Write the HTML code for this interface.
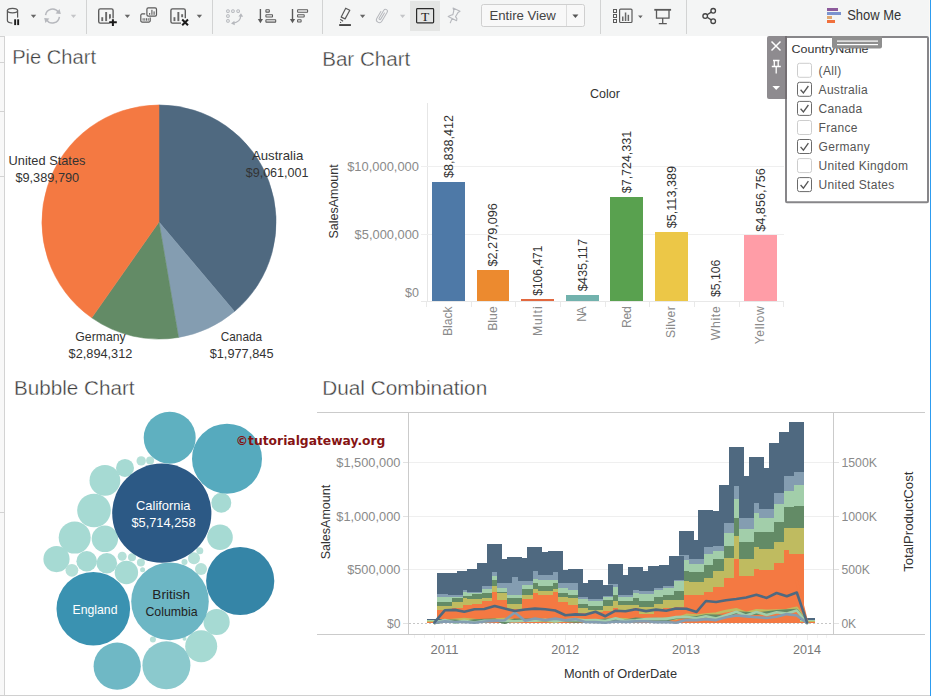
<!DOCTYPE html>
<html lang="en"><head><meta charset="utf-8"><title>Tableau Dashboard</title>
<style>
html,body{margin:0;padding:0;background:#fff;}
body{width:931px;height:696px;overflow:hidden;position:relative;font-family:"Liberation Sans", sans-serif;}
#toolbar{position:absolute;left:0;top:0;width:931px;height:36px;background:#f4f5f5;}
#leftstrip{position:absolute;left:0;top:36px;width:4px;height:659px;background:#f8f8f8;border-right:1px solid #d3d3d3;}
#leftstrip i{position:absolute;left:0;width:4px;height:1px;background:#d3d3d3;}
#bottomline{position:absolute;left:0;top:695px;width:931px;height:1px;background:#d0d0d0;}
#rightline{position:absolute;left:930px;top:0;width:1px;height:696px;background:#2d9cf0;}
#rightpad{position:absolute;left:929px;top:0;width:1px;height:36px;background:#fdf9f4;}
svg{position:absolute;left:0;top:0;font-family:"Liberation Sans", sans-serif;}
</style></head>
<body>
<div id="toolbar"></div>
<div id="rightpad"></div>
<div id="leftstrip"><i style="top:0"></i><i style="top:26px"></i><i style="top:75px"></i><i style="top:140px"></i><i style="top:476px"></i></div>
<div id="bottomline"></div>
<div id="rightline"></div>
<svg width="931" height="696" viewBox="0 0 931 696">
<g id="toolbar-icons">
<g shape-rendering="crispEdges">
<rect x="86" y="0" width="1" height="34" fill="#d2d3d3"/>
<rect x="212" y="0" width="1" height="34" fill="#d2d3d3"/>
<rect x="322" y="0" width="1" height="34" fill="#d2d3d3"/>
<rect x="600" y="0" width="1" height="34" fill="#d2d3d3"/>
<rect x="686" y="0" width="1" height="34" fill="#d2d3d3"/>
</g>
<g fill="none" stroke="#5a5a5a" stroke-width="1.25"><ellipse cx="12.5" cy="10.6" rx="5.1" ry="2.3"/><path d="M7.4,10.6 V20.6 C7.4,22.4 10,23 12.3,23"/><path d="M17.6,10.6 V17.6"/></g>
<rect x="14.2" y="19.3" width="1.9" height="5.8" fill="#1c1c1c"/><rect x="17.2" y="19.3" width="1.9" height="5.8" fill="#1c1c1c"/>
<path d="M30.8,14.8 h5.4 l-2.7,3.2 z" fill="#666"/>
<g fill="none" stroke="#b6b8bd" stroke-width="1.5"><path d="M45.6,15.2 A7,7 0 0 1 58.4,12.2"/><path d="M59.4,16.8 A7,7 0 0 1 46.6,19.8"/></g>
<path d="M55.6,13.4 l5.2,0.6 l-1.2,-5 z" fill="#b6b8bd"/><path d="M49.4,18.6 l-5.2,-0.6 l1.2,5 z" fill="#b6b8bd"/>
<path d="M70.8,14.8 h5.4 l-2.7,3.2 z" fill="#c4c5c8"/>
<rect x="98.7" y="8.9" width="14.4" height="14.2" rx="1.6" fill="none" stroke="#5a5a5a" stroke-width="1.35"/>
<g fill="#686868"><rect x="101.3" y="17.2" width="1.9" height="3.9"/><rect x="105.2" y="12" width="1.9" height="9.1"/><rect x="109" y="14.2" width="1.9" height="5"/></g>
<rect x="109.6" y="18.4" width="8" height="8" fill="#f4f5f5"/>
<path d="M112.9,19.3 v6.6 M109.2,22.3 h7.6" stroke="#1a1a1a" stroke-width="2" fill="none"/>
<path d="M124.7,14.8 h5.4 l-2.7,3.2 z" fill="#666"/>
<rect x="146.9" y="7.9" width="9.6" height="8.2" rx="1.4" fill="none" stroke="#5a5a5a" stroke-width="1.20"/>
<g fill="#686868"><rect x="149" y="13" width="1.2" height="1.8"/><rect x="151.3" y="9.8" width="1.2" height="5"/><rect x="153.5" y="11.4" width="1.2" height="3.4"/></g>
<path d="M145.2,13.9 h-3 a1.4,1.4 0 0 0 -1.4,1.4 v5.4 a1.4,1.4 0 0 0 1.4,1.4 h6.6 a1.4,1.4 0 0 0 1.4,-1.4 v-3.2" fill="none" stroke="#5a5a5a" stroke-width="1.2"/>
<g fill="#686868"><rect x="142.6" y="18.2" width="1" height="2.5"/><rect x="144.3" y="18.2" width="1" height="2.5"/><rect x="146" y="18.2" width="1" height="2.5"/><rect x="147.7" y="18.2" width="1" height="2.5"/></g>
<rect x="170.9" y="8.9" width="14.4" height="14.2" rx="1.6" fill="none" stroke="#5a5a5a" stroke-width="1.35"/>
<g fill="#686868"><rect x="173.5" y="17.2" width="1.9" height="3.9"/><rect x="177.4" y="12" width="1.9" height="9.1"/><rect x="181.2" y="14.2" width="1.9" height="3"/></g>
<rect x="181" y="18.2" width="8.5" height="8" fill="#f4f5f5"/>
<path d="M182.2,19.5 l5.8,5.8 M188,19.5 l-5.8,5.8" stroke="#1a1a1a" stroke-width="2" fill="none"/>
<path d="M196.7,14.8 h5.4 l-2.7,3.2 z" fill="#666"/>
<g fill="none" stroke="#b6b8bd" stroke-width="1">
<rect x="226.7" y="9.9" width="2.5" height="2.5" rx="0.3"/>
<rect x="231.7" y="9.9" width="2.5" height="2.5" rx="0.3"/>
<rect x="236.9" y="9.9" width="2.5" height="2.5" rx="0.3"/>
<rect x="226.7" y="14.8" width="2.5" height="2.5" rx="0.3"/>
<rect x="226.7" y="19.7" width="2.5" height="2.5" rx="0.3"/>
<path d="M240.8,16 C240.4,20 237,22.6 233.2,23.2" stroke-width="1.3"/></g>
<path d="M238.4,16.6 l2.6,-3.4 l2.2,3.6 z M234.4,20.8 l-3.4,2.6 l3.8,1.8 z" fill="#b6b8bd"/>
<path d="M260.4,9 v11" fill="none" stroke="#5a5a5a" stroke-width="1.4"/><path d="M257.8,19 h5.2 l-2.6,4.2 z" fill="#5a5a5a"/>
<g fill="none" stroke="#5a5a5a" stroke-width="1.05"><rect x="265.9" y="9.8" width="3.4" height="2.3" rx="0.4"/><rect x="265.9" y="14.7" width="6.6" height="2.3" rx="0.4"/><rect x="265.9" y="19.7" width="9.8" height="2.4" rx="0.4"/></g>
<path d="M292.5,9 v11" fill="none" stroke="#5a5a5a" stroke-width="1.4"/><path d="M289.9,19 h5.2 l-2.6,4.2 z" fill="#5a5a5a"/>
<g fill="none" stroke="#5a5a5a" stroke-width="1.05"><rect x="297.6" y="9.8" width="10" height="2.4" rx="0.4"/><rect x="297.6" y="14.7" width="6.6" height="2.3" rx="0.4"/><rect x="297.6" y="19.7" width="3.5" height="2.3" rx="0.4"/></g>
<path d="M345.7,8.2 L349.8,10.2 L345.1,18.9 L341.2,17.1 Z M340.2,19.2 L343.1,21.2" fill="none" stroke="#5a5a5a" stroke-width="1.2" stroke-linejoin="round"/>
<circle cx="340.6" cy="22.4" r="0.65" fill="#5a5a5a"/>
<rect x="339.2" y="24.1" width="11.7" height="1.9" fill="#444"/>
<path d="M359.9,14.8 h5.4 l-2.7,3.2 z" fill="#666"/>
<path transform="translate(381.9,15.4) rotate(31)" d="M0.9,-3.4 V3.8 A0.95,0.95 0 0 1 -1,3.8 V-5.4 A1.95,1.95 0 0 1 2.9,-5.4 V5 A2.9,2.9 0 0 1 -2.9,5 V-2.8" fill="none" stroke="#b6b8bd" stroke-width="1.0" stroke-linecap="round"/>
<path d="M399.9,14.8 h5.4 l-2.7,3.2 z" fill="#c4c5c8"/>
<rect x="410" y="1" width="30" height="30" fill="#e4e5e4"/>
<rect x="416.6" y="8.6" width="17" height="14.2" rx="0.8" fill="none" stroke="#2a2a2a" stroke-width="1.2"/>
<text x="425.1" y="20.6" font-family='"Liberation Serif", serif' font-size="13.5" text-anchor="middle" fill="#222">T</text>
<path d="M453.1,8 L460,11.3 L458.1,12.4 L455.5,16.7 L456.9,18.6 L456.6,20.8 L448.2,16.4 L450.8,15.2 L452.9,14.6 L453.8,10.6 Z M452.1,18.6 L450.3,22.7" fill="none" stroke="#b6b8bd" stroke-width="1.1" stroke-linejoin="round" stroke-linecap="round"/>
<rect x="481.5" y="4.5" width="103" height="22" rx="2" fill="#f8f8f8" stroke="#cfcfcf"/>
<rect x="566" y="5" width="1" height="21" fill="#dcdcdc" shape-rendering="crispEdges"/>
<text x="489.4" y="20" font-size="13.4" fill="#444" textLength="66.5" lengthAdjust="spacingAndGlyphs">Entire View</text>
<path d="M572.4,14.5 h6.0 l-3.0,3.4 z" fill="#555"/>
<g fill="none" stroke="#5a5a5a" stroke-width="1"><rect x="613.5" y="9.5" width="3" height="3"/><rect x="613.5" y="14.5" width="3" height="3"/><rect x="613.5" y="19.5" width="3" height="3"/></g>
<rect x="619.6" y="9.1" width="12.4" height="13.4" rx="1.0" fill="none" stroke="#5a5a5a" stroke-width="1.20"/>
<g fill="#686868"><rect x="622" y="16.5" width="1.5" height="4.5"/><rect x="624.8" y="12.5" width="1.5" height="8.5"/><rect x="627.6" y="14.8" width="1.5" height="6.2"/></g>
<path d="M638.1,15.4 h4.6 l-2.3,2.8 z" fill="#666"/>
<path d="M654.3,9.8 h16.8" fill="none" stroke="#5a5a5a" stroke-width="1.8"/><path d="M656.5,9.8 v8.4 h12.5 v-8.4 M662.7,18.2 v5 M658.8,23.6 h8" fill="none" stroke="#5a5a5a" stroke-width="1.3"/>
<g fill="none" stroke="#444" stroke-width="1.35"><circle cx="705.2" cy="16" r="2.3"/><circle cx="713.2" cy="10.8" r="2.3"/><circle cx="713.2" cy="21.2" r="2.3"/><path d="M707.2,14.8 l4,-2.7 M707.2,17.2 l4,2.7"/></g>
<g shape-rendering="crispEdges"><rect x="827" y="8" width="11" height="3" fill="#8c5a9b"/><rect x="827" y="12" width="14" height="3" fill="#7b93cf"/><rect x="827" y="16" width="5" height="3" fill="#e0a872"/><rect x="827" y="20" width="8" height="3" fill="#f0703c"/></g>
<text x="847.2" y="20.2" font-size="14.4" fill="#333" textLength="54" lengthAdjust="spacingAndGlyphs">Show Me</text>
</g>
<g id="pie">
<path d="M159.00,222.00 L159.00,104.90 A117.10,117.10 0 0 1 234.49,311.52 Z" fill="#4f6980" stroke="#4f6980" stroke-width="0.5" stroke-linejoin="round"/>
<path d="M159.00,222.00 L234.49,311.52 A117.10,117.10 0 0 1 178.55,337.46 Z" fill="#849db1" stroke="#849db1" stroke-width="0.5" stroke-linejoin="round"/>
<path d="M159.00,222.00 L178.55,337.46 A117.10,117.10 0 0 1 91.73,317.85 Z" fill="#638b66" stroke="#638b66" stroke-width="0.5" stroke-linejoin="round"/>
<path d="M159.00,222.00 L91.73,317.85 A117.10,117.10 0 0 1 159.00,104.90 Z" fill="#f47942" stroke="#f47942" stroke-width="0.5" stroke-linejoin="round"/>
</g>
<g id="bar">
<g shape-rendering="crispEdges">
<rect x="427" y="103" width="1" height="199" fill="#e6e6e6"/>
<rect x="421" y="166" width="363" height="1" fill="#efefef"/>
<rect x="421" y="234" width="363" height="1" fill="#efefef"/>
<rect x="432.0" y="181.7" width="32.8" height="119.1" fill="#4e79a7"/>
<rect x="476.6" y="270.1" width="32.8" height="30.7" fill="#ec8a2f"/>
<rect x="521.1" y="299.4" width="32.8" height="1.4" fill="#e2683f"/>
<rect x="565.7" y="294.9" width="32.8" height="5.9" fill="#72b2ad"/>
<rect x="610.3" y="196.8" width="32.8" height="104.0" fill="#59a14f"/>
<rect x="654.9" y="231.9" width="32.8" height="68.9" fill="#ecc747"/>
<rect x="744.0" y="235.4" width="32.8" height="65.4" fill="#ff9da7"/>
<rect x="421" y="301" width="363" height="1" fill="#e8e8e8"/>
<rect x="426" y="302" width="1" height="5" fill="#e9e9e9"/>
<rect x="471" y="302" width="1" height="5" fill="#e9e9e9"/>
<rect x="515" y="302" width="1" height="5" fill="#e9e9e9"/>
<rect x="560" y="302" width="1" height="5" fill="#e9e9e9"/>
<rect x="605" y="302" width="1" height="5" fill="#e9e9e9"/>
<rect x="649" y="302" width="1" height="5" fill="#e9e9e9"/>
<rect x="694" y="302" width="1" height="5" fill="#e9e9e9"/>
<rect x="739" y="302" width="1" height="5" fill="#e9e9e9"/>
<rect x="783" y="302" width="1" height="5" fill="#e9e9e9"/>
</g>
<text transform="translate(448.8,178.1) rotate(-90)" font-size="12.5" fill="#333" dominant-baseline="central" textLength="63.0" lengthAdjust="spacingAndGlyphs">$8,838,412</text>
<text transform="translate(448.4,306.3) rotate(-90)" font-size="12.2" fill="#8a8a8a" text-anchor="end" dominant-baseline="central" textLength="29.8" lengthAdjust="spacing">Black</text>
<text transform="translate(493.4,266.5) rotate(-90)" font-size="12.5" fill="#333" dominant-baseline="central" textLength="63.4" lengthAdjust="spacingAndGlyphs">$2,279,096</text>
<text transform="translate(493.0,306.3) rotate(-90)" font-size="12.2" fill="#8a8a8a" text-anchor="end" dominant-baseline="central" textLength="24.5" lengthAdjust="spacing">Blue</text>
<text transform="translate(537.9,295.8) rotate(-90)" font-size="12.5" fill="#333" dominant-baseline="central" textLength="50.3" lengthAdjust="spacingAndGlyphs">$106,471</text>
<text transform="translate(537.5,306.3) rotate(-90)" font-size="12.2" fill="#8a8a8a" text-anchor="end" dominant-baseline="central" textLength="29.8" lengthAdjust="spacing">Multi</text>
<text transform="translate(582.5,291.3) rotate(-90)" font-size="12.5" fill="#333" dominant-baseline="central" textLength="52.3" lengthAdjust="spacingAndGlyphs">$435,117</text>
<text transform="translate(582.1,306.3) rotate(-90)" font-size="12.2" fill="#8a8a8a" text-anchor="end" dominant-baseline="central" textLength="15.5" lengthAdjust="spacing">NA</text>
<text transform="translate(627.1,193.2) rotate(-90)" font-size="12.5" fill="#333" dominant-baseline="central" textLength="62.3" lengthAdjust="spacingAndGlyphs">$7,724,331</text>
<text transform="translate(626.7,306.3) rotate(-90)" font-size="12.2" fill="#8a8a8a" text-anchor="end" dominant-baseline="central" textLength="21.6" lengthAdjust="spacing">Red</text>
<text transform="translate(671.6,228.3) rotate(-90)" font-size="12.5" fill="#333" dominant-baseline="central" textLength="62.3" lengthAdjust="spacingAndGlyphs">$5,113,389</text>
<text transform="translate(671.2,306.3) rotate(-90)" font-size="12.2" fill="#8a8a8a" text-anchor="end" dominant-baseline="central" textLength="31.8" lengthAdjust="spacing">Silver</text>
<text transform="translate(716.2,297.1) rotate(-90)" font-size="12.5" fill="#333" dominant-baseline="central" textLength="37.4" lengthAdjust="spacingAndGlyphs">$5,106</text>
<text transform="translate(715.8,306.3) rotate(-90)" font-size="12.2" fill="#8a8a8a" text-anchor="end" dominant-baseline="central" textLength="33.9" lengthAdjust="spacing">White</text>
<text transform="translate(760.8,231.8) rotate(-90)" font-size="12.5" fill="#333" dominant-baseline="central" textLength="63.6" lengthAdjust="spacingAndGlyphs">$4,856,756</text>
<text transform="translate(760.4,306.3) rotate(-90)" font-size="12.2" fill="#8a8a8a" text-anchor="end" dominant-baseline="central" textLength="38.0" lengthAdjust="spacing">Yellow</text>
<text x="419" y="166.5" font-size="12.8" fill="#8a8a8a" text-anchor="end" dominant-baseline="central" textLength="71.8" lengthAdjust="spacingAndGlyphs">$10,000,000</text>
<text x="419" y="234.8" font-size="12.8" fill="#8a8a8a" text-anchor="end" dominant-baseline="central" textLength="64.4" lengthAdjust="spacingAndGlyphs">$5,000,000</text>
<text x="419" y="292.6" font-size="12.8" fill="#8a8a8a" text-anchor="end" dominant-baseline="central" textLength="13.9" lengthAdjust="spacingAndGlyphs">$0</text>
<text transform="translate(333.5,201.4) rotate(-90)" font-size="12.5" fill="#333" text-anchor="middle" dominant-baseline="central" textLength="74.2" lengthAdjust="spacingAndGlyphs">SalesAmount</text>
<text x="605" y="94" font-size="12.5" fill="#333" text-anchor="middle" dominant-baseline="central">Color</text>
</g>
<g id="bubble">
<circle cx="221.3" cy="502.8" r="10.0" fill="#a6dad3"/>
<circle cx="220.0" cy="537.3" r="12.8" fill="#a6dad3"/>
<circle cx="104.9" cy="480.4" r="15.4" fill="#a6dad3"/>
<circle cx="125.0" cy="467.9" r="9.0" fill="#a6dad3"/>
<circle cx="141.2" cy="460.9" r="4.7" fill="#b5e0d8"/>
<circle cx="150.1" cy="460.6" r="4.0" fill="#b5e0d8"/>
<circle cx="94.0" cy="510.5" r="16.8" fill="#a6dad3"/>
<circle cx="74.7" cy="537.6" r="16.0" fill="#a6dad3"/>
<circle cx="104.9" cy="538.8" r="13.2" fill="#a6dad3"/>
<circle cx="56.5" cy="559.1" r="13.1" fill="#a6dad3"/>
<circle cx="86.7" cy="561.3" r="10.3" fill="#a6dad3"/>
<circle cx="106.8" cy="563.3" r="10.3" fill="#a6dad3"/>
<circle cx="126.4" cy="572.5" r="11.7" fill="#a6dad3"/>
<circle cx="71.9" cy="570.3" r="6.4" fill="#b5e0d8"/>
<circle cx="122.2" cy="556.3" r="4.5" fill="#b5e0d8"/>
<circle cx="132.0" cy="557.2" r="4.0" fill="#b5e0d8"/>
<circle cx="140.9" cy="562.5" r="4.0" fill="#b5e0d8"/>
<circle cx="142.6" cy="569.7" r="2.5" fill="#b5e0d8"/>
<circle cx="194.0" cy="558.3" r="6.0" fill="#b5e0d8"/>
<circle cx="201.0" cy="568.9" r="6.0" fill="#b5e0d8"/>
<circle cx="199.8" cy="550.7" r="3.5" fill="#b5e0d8"/>
<circle cx="184.5" cy="561.9" r="3.0" fill="#b5e0d8"/>
<circle cx="152.9" cy="639.6" r="3.0" fill="#b5e0d8"/>
<circle cx="184.5" cy="638.7" r="2.0" fill="#b5e0d8"/>
<circle cx="201.2" cy="646.3" r="16.0" fill="#a6dad3"/>
<circle cx="216.6" cy="622.0" r="13.1" fill="#a6dad3"/>
<circle cx="161.8" cy="513.2" r="49.6" fill="#2c5985"/>
<circle cx="169.7" cy="437.7" r="26.0" fill="#5fb0c0"/>
<circle cx="227.0" cy="458.7" r="35.0" fill="#56aabe"/>
<circle cx="93.3" cy="608.8" r="36.8" fill="#3a92b1"/>
<circle cx="170.0" cy="601.4" r="38.8" fill="#6cb6c4"/>
<circle cx="240.2" cy="581.0" r="34.1" fill="#3585a7"/>
<circle cx="117.2" cy="666.2" r="23.6" fill="#6fb8c5"/>
<circle cx="166.4" cy="665.3" r="24.0" fill="#8bc9cd"/>
</g>
<g id="dual">
<g shape-rendering="crispEdges">
<rect x="317" y="412" width="608" height="1" fill="#cbcbcb"/>
<rect x="317" y="634" width="608" height="1" fill="#cbcbcb"/>
<rect x="408" y="412" width="1" height="223" fill="#cbcbcb"/>
<rect x="833" y="412" width="1" height="223" fill="#cbcbcb"/>
<rect x="409" y="462" width="424" height="1" fill="#efefef"/>
<rect x="403" y="462" width="5" height="1" fill="#e2e2e2"/>
<rect x="834" y="462" width="5" height="1" fill="#e2e2e2"/>
<rect x="409" y="516" width="424" height="1" fill="#efefef"/>
<rect x="403" y="516" width="5" height="1" fill="#e2e2e2"/>
<rect x="834" y="516" width="5" height="1" fill="#e2e2e2"/>
<rect x="409" y="569" width="424" height="1" fill="#efefef"/>
<rect x="403" y="569" width="5" height="1" fill="#e2e2e2"/>
<rect x="834" y="569" width="5" height="1" fill="#e2e2e2"/>
<rect x="403" y="623" width="5" height="1" fill="#e2e2e2"/>
<rect x="834" y="623" width="5" height="1" fill="#e2e2e2"/>
<rect x="414" y="635" width="1" height="3" fill="#f2f2f2"/>
<rect x="424" y="635" width="1" height="3" fill="#f2f2f2"/>
<rect x="434" y="635" width="1" height="3" fill="#f2f2f2"/>
<rect x="454" y="635" width="1" height="3" fill="#f2f2f2"/>
<rect x="464" y="635" width="1" height="3" fill="#f2f2f2"/>
<rect x="474" y="635" width="1" height="3" fill="#f2f2f2"/>
<rect x="484" y="635" width="1" height="3" fill="#f2f2f2"/>
<rect x="494" y="635" width="1" height="3" fill="#f2f2f2"/>
<rect x="504" y="635" width="1" height="3" fill="#f2f2f2"/>
<rect x="514" y="635" width="1" height="3" fill="#f2f2f2"/>
<rect x="525" y="635" width="1" height="3" fill="#f2f2f2"/>
<rect x="534" y="635" width="1" height="3" fill="#f2f2f2"/>
<rect x="545" y="635" width="1" height="3" fill="#f2f2f2"/>
<rect x="555" y="635" width="1" height="3" fill="#f2f2f2"/>
<rect x="575" y="635" width="1" height="3" fill="#f2f2f2"/>
<rect x="585" y="635" width="1" height="3" fill="#f2f2f2"/>
<rect x="595" y="635" width="1" height="3" fill="#f2f2f2"/>
<rect x="605" y="635" width="1" height="3" fill="#f2f2f2"/>
<rect x="615" y="635" width="1" height="3" fill="#f2f2f2"/>
<rect x="625" y="635" width="1" height="3" fill="#f2f2f2"/>
<rect x="635" y="635" width="1" height="3" fill="#f2f2f2"/>
<rect x="646" y="635" width="1" height="3" fill="#f2f2f2"/>
<rect x="655" y="635" width="1" height="3" fill="#f2f2f2"/>
<rect x="666" y="635" width="1" height="3" fill="#f2f2f2"/>
<rect x="676" y="635" width="1" height="3" fill="#f2f2f2"/>
<rect x="696" y="635" width="1" height="3" fill="#f2f2f2"/>
<rect x="705" y="635" width="1" height="3" fill="#f2f2f2"/>
<rect x="716" y="635" width="1" height="3" fill="#f2f2f2"/>
<rect x="726" y="635" width="1" height="3" fill="#f2f2f2"/>
<rect x="736" y="635" width="1" height="3" fill="#f2f2f2"/>
<rect x="746" y="635" width="1" height="3" fill="#f2f2f2"/>
<rect x="756" y="635" width="1" height="3" fill="#f2f2f2"/>
<rect x="766" y="635" width="1" height="3" fill="#f2f2f2"/>
<rect x="776" y="635" width="1" height="3" fill="#f2f2f2"/>
<rect x="786" y="635" width="1" height="3" fill="#f2f2f2"/>
<rect x="796" y="635" width="1" height="3" fill="#f2f2f2"/>
<rect x="817" y="635" width="1" height="3" fill="#f2f2f2"/>
<rect x="826" y="635" width="1" height="3" fill="#f2f2f2"/>
<rect x="444" y="635" width="1" height="5" fill="#ebebeb"/>
<rect x="565" y="635" width="1" height="5" fill="#ebebeb"/>
<rect x="686" y="635" width="1" height="5" fill="#ebebeb"/>
<rect x="807" y="635" width="1" height="5" fill="#ebebeb"/>
</g>
<line x1="409" y1="623.5" x2="833" y2="623.5" stroke="#c6c6c6" stroke-width="1" stroke-dasharray="2,2"/>
<g shape-rendering="crispEdges">
<rect x="427.00" y="621.60" width="15.00" height="1.60" fill="#f47942"/>
<rect x="437.25" y="609.80" width="15.00" height="13.40" fill="#f47942"/>
<rect x="447.50" y="607.90" width="15.00" height="15.30" fill="#f47942"/>
<rect x="456.75" y="604.90" width="15.00" height="18.30" fill="#f47942"/>
<rect x="467.00" y="603.70" width="15.00" height="19.50" fill="#f47942"/>
<rect x="476.91" y="601.00" width="15.00" height="22.20" fill="#f47942"/>
<rect x="487.16" y="592.00" width="15.00" height="31.20" fill="#f47942"/>
<rect x="497.07" y="599.90" width="15.00" height="23.30" fill="#f47942"/>
<rect x="507.32" y="609.00" width="15.00" height="14.20" fill="#f47942"/>
<rect x="517.57" y="599.10" width="15.00" height="24.10" fill="#f47942"/>
<rect x="527.48" y="593.00" width="15.00" height="30.20" fill="#f47942"/>
<rect x="537.73" y="595.00" width="15.00" height="28.20" fill="#f47942"/>
<rect x="547.64" y="592.00" width="15.00" height="31.20" fill="#f47942"/>
<rect x="557.89" y="602.10" width="15.00" height="21.10" fill="#f47942"/>
<rect x="568.14" y="604.80" width="15.00" height="18.40" fill="#f47942"/>
<rect x="577.72" y="612.90" width="15.00" height="10.30" fill="#f47942"/>
<rect x="587.97" y="612.00" width="15.00" height="11.20" fill="#f47942"/>
<rect x="597.88" y="611.10" width="15.00" height="12.10" fill="#f47942"/>
<rect x="608.13" y="607.90" width="15.00" height="15.30" fill="#f47942"/>
<rect x="618.04" y="611.20" width="15.00" height="12.00" fill="#f47942"/>
<rect x="628.29" y="608.20" width="15.00" height="15.00" fill="#f47942"/>
<rect x="638.54" y="613.70" width="15.00" height="9.50" fill="#f47942"/>
<rect x="648.45" y="608.70" width="15.00" height="14.50" fill="#f47942"/>
<rect x="658.70" y="607.70" width="15.00" height="15.50" fill="#f47942"/>
<rect x="668.61" y="607.20" width="15.00" height="16.00" fill="#f47942"/>
<rect x="678.86" y="595.00" width="15.00" height="28.20" fill="#f47942"/>
<rect x="689.11" y="594.50" width="15.00" height="28.70" fill="#f47942"/>
<rect x="698.36" y="592.20" width="15.00" height="31.00" fill="#f47942"/>
<rect x="708.61" y="587.00" width="15.00" height="36.20" fill="#f47942"/>
<rect x="718.52" y="578.20" width="15.00" height="45.00" fill="#f47942"/>
<rect x="728.77" y="559.00" width="15.00" height="64.20" fill="#f47942"/>
<rect x="738.68" y="576.00" width="15.00" height="47.20" fill="#f47942"/>
<rect x="748.93" y="568.80" width="15.00" height="54.40" fill="#f47942"/>
<rect x="759.18" y="570.20" width="15.00" height="53.00" fill="#f47942"/>
<rect x="769.09" y="563.10" width="15.00" height="60.10" fill="#f47942"/>
<rect x="779.34" y="549.70" width="15.00" height="73.50" fill="#f47942"/>
<rect x="789.25" y="553.70" width="15.00" height="69.50" fill="#f47942"/>
<rect x="799.50" y="621.70" width="15.00" height="1.50" fill="#f47942"/>
<rect x="427.00" y="621.20" width="15.00" height="0.40" fill="#bfbb60"/>
<rect x="437.25" y="606.00" width="15.00" height="3.80" fill="#bfbb60"/>
<rect x="447.50" y="602.10" width="15.00" height="5.80" fill="#bfbb60"/>
<rect x="456.75" y="598.00" width="15.00" height="6.90" fill="#bfbb60"/>
<rect x="467.00" y="598.50" width="15.00" height="5.20" fill="#bfbb60"/>
<rect x="476.91" y="598.20" width="15.00" height="2.80" fill="#bfbb60"/>
<rect x="487.16" y="586.00" width="15.00" height="6.00" fill="#bfbb60"/>
<rect x="497.07" y="593.00" width="15.00" height="6.90" fill="#bfbb60"/>
<rect x="507.32" y="604.00" width="15.00" height="5.00" fill="#bfbb60"/>
<rect x="517.57" y="595.00" width="15.00" height="4.10" fill="#bfbb60"/>
<rect x="527.48" y="589.00" width="15.00" height="4.00" fill="#bfbb60"/>
<rect x="537.73" y="590.90" width="15.00" height="4.10" fill="#bfbb60"/>
<rect x="547.64" y="589.00" width="15.00" height="3.00" fill="#bfbb60"/>
<rect x="557.89" y="597.10" width="15.00" height="5.00" fill="#bfbb60"/>
<rect x="568.14" y="598.00" width="15.00" height="6.80" fill="#bfbb60"/>
<rect x="577.72" y="607.90" width="15.00" height="5.00" fill="#bfbb60"/>
<rect x="587.97" y="609.80" width="15.00" height="2.20" fill="#bfbb60"/>
<rect x="597.88" y="606.00" width="15.00" height="5.10" fill="#bfbb60"/>
<rect x="608.13" y="601.00" width="15.00" height="6.90" fill="#bfbb60"/>
<rect x="618.04" y="604.80" width="15.00" height="6.40" fill="#bfbb60"/>
<rect x="628.29" y="605.10" width="15.00" height="3.10" fill="#bfbb60"/>
<rect x="638.54" y="607.00" width="15.00" height="6.70" fill="#bfbb60"/>
<rect x="648.45" y="604.20" width="15.00" height="4.50" fill="#bfbb60"/>
<rect x="658.70" y="600.00" width="15.00" height="7.70" fill="#bfbb60"/>
<rect x="668.61" y="600.00" width="15.00" height="7.20" fill="#bfbb60"/>
<rect x="678.86" y="581.20" width="15.00" height="13.80" fill="#bfbb60"/>
<rect x="689.11" y="581.80" width="15.00" height="12.70" fill="#bfbb60"/>
<rect x="698.36" y="577.80" width="15.00" height="14.40" fill="#bfbb60"/>
<rect x="708.61" y="570.90" width="15.00" height="16.10" fill="#bfbb60"/>
<rect x="718.52" y="558.00" width="15.00" height="20.20" fill="#bfbb60"/>
<rect x="728.77" y="535.80" width="15.00" height="23.20" fill="#bfbb60"/>
<rect x="738.68" y="558.80" width="15.00" height="17.20" fill="#bfbb60"/>
<rect x="748.93" y="547.30" width="15.00" height="21.50" fill="#bfbb60"/>
<rect x="759.18" y="549.40" width="15.00" height="20.80" fill="#bfbb60"/>
<rect x="769.09" y="541.90" width="15.00" height="21.20" fill="#bfbb60"/>
<rect x="779.34" y="527.90" width="15.00" height="21.80" fill="#bfbb60"/>
<rect x="789.25" y="527.90" width="15.00" height="25.80" fill="#bfbb60"/>
<rect x="799.50" y="621.20" width="15.00" height="0.50" fill="#bfbb60"/>
<rect x="427.00" y="620.80" width="15.00" height="0.40" fill="#638b66"/>
<rect x="437.25" y="602.10" width="15.00" height="3.90" fill="#638b66"/>
<rect x="447.50" y="598.00" width="15.00" height="4.10" fill="#638b66"/>
<rect x="456.75" y="595.90" width="15.00" height="2.10" fill="#638b66"/>
<rect x="467.00" y="594.20" width="15.00" height="4.30" fill="#638b66"/>
<rect x="476.91" y="593.00" width="15.00" height="5.20" fill="#638b66"/>
<rect x="487.16" y="580.10" width="15.00" height="5.90" fill="#638b66"/>
<rect x="497.07" y="592.20" width="15.00" height="0.80" fill="#638b66"/>
<rect x="507.32" y="598.20" width="15.00" height="5.80" fill="#638b66"/>
<rect x="517.57" y="589.10" width="15.00" height="5.90" fill="#638b66"/>
<rect x="527.48" y="583.10" width="15.00" height="5.90" fill="#638b66"/>
<rect x="537.73" y="586.00" width="15.00" height="4.90" fill="#638b66"/>
<rect x="547.64" y="583.10" width="15.00" height="5.90" fill="#638b66"/>
<rect x="557.89" y="593.00" width="15.00" height="4.10" fill="#638b66"/>
<rect x="568.14" y="595.20" width="15.00" height="2.80" fill="#638b66"/>
<rect x="577.72" y="604.00" width="15.00" height="3.90" fill="#638b66"/>
<rect x="587.97" y="606.10" width="15.00" height="3.70" fill="#638b66"/>
<rect x="597.88" y="600.40" width="15.00" height="5.60" fill="#638b66"/>
<rect x="608.13" y="595.20" width="15.00" height="5.80" fill="#638b66"/>
<rect x="618.04" y="601.00" width="15.00" height="3.80" fill="#638b66"/>
<rect x="628.29" y="598.00" width="15.00" height="7.10" fill="#638b66"/>
<rect x="638.54" y="601.00" width="15.00" height="6.00" fill="#638b66"/>
<rect x="648.45" y="597.30" width="15.00" height="6.90" fill="#638b66"/>
<rect x="658.70" y="595.00" width="15.00" height="5.00" fill="#638b66"/>
<rect x="668.61" y="591.00" width="15.00" height="9.00" fill="#638b66"/>
<rect x="678.86" y="570.90" width="15.00" height="10.30" fill="#638b66"/>
<rect x="689.11" y="572.10" width="15.00" height="9.70" fill="#638b66"/>
<rect x="698.36" y="565.20" width="15.00" height="12.60" fill="#638b66"/>
<rect x="708.61" y="558.80" width="15.00" height="12.10" fill="#638b66"/>
<rect x="718.52" y="546.30" width="15.00" height="11.70" fill="#638b66"/>
<rect x="728.77" y="518.00" width="15.00" height="17.80" fill="#638b66"/>
<rect x="738.68" y="541.90" width="15.00" height="16.90" fill="#638b66"/>
<rect x="748.93" y="531.50" width="15.00" height="15.80" fill="#638b66"/>
<rect x="759.18" y="531.50" width="15.00" height="17.90" fill="#638b66"/>
<rect x="769.09" y="521.90" width="15.00" height="20.00" fill="#638b66"/>
<rect x="779.34" y="506.90" width="15.00" height="21.00" fill="#638b66"/>
<rect x="789.25" y="505.90" width="15.00" height="22.00" fill="#638b66"/>
<rect x="799.50" y="620.70" width="15.00" height="0.50" fill="#638b66"/>
<rect x="427.00" y="620.20" width="15.00" height="0.60" fill="#a2ceaa"/>
<rect x="437.25" y="597.00" width="15.00" height="5.10" fill="#a2ceaa"/>
<rect x="447.50" y="597.00" width="15.00" height="1.00" fill="#a2ceaa"/>
<rect x="456.75" y="592.00" width="15.00" height="3.90" fill="#a2ceaa"/>
<rect x="467.00" y="593.00" width="15.00" height="1.20" fill="#a2ceaa"/>
<rect x="476.91" y="589.00" width="15.00" height="4.00" fill="#a2ceaa"/>
<rect x="487.16" y="576.00" width="15.00" height="4.10" fill="#a2ceaa"/>
<rect x="497.07" y="588.10" width="15.00" height="4.10" fill="#a2ceaa"/>
<rect x="507.32" y="595.00" width="15.00" height="3.20" fill="#a2ceaa"/>
<rect x="517.57" y="585.00" width="15.00" height="4.10" fill="#a2ceaa"/>
<rect x="527.48" y="578.80" width="15.00" height="4.30" fill="#a2ceaa"/>
<rect x="537.73" y="580.10" width="15.00" height="5.90" fill="#a2ceaa"/>
<rect x="547.64" y="579.80" width="15.00" height="3.30" fill="#a2ceaa"/>
<rect x="557.89" y="588.10" width="15.00" height="4.90" fill="#a2ceaa"/>
<rect x="568.14" y="590.00" width="15.00" height="5.20" fill="#a2ceaa"/>
<rect x="577.72" y="599.10" width="15.00" height="4.90" fill="#a2ceaa"/>
<rect x="587.97" y="601.00" width="15.00" height="5.10" fill="#a2ceaa"/>
<rect x="597.88" y="596.90" width="15.00" height="3.50" fill="#a2ceaa"/>
<rect x="608.13" y="587.00" width="15.00" height="8.20" fill="#a2ceaa"/>
<rect x="618.04" y="597.10" width="15.00" height="3.90" fill="#a2ceaa"/>
<rect x="628.29" y="593.00" width="15.00" height="5.00" fill="#a2ceaa"/>
<rect x="638.54" y="594.10" width="15.00" height="6.90" fill="#a2ceaa"/>
<rect x="648.45" y="589.90" width="15.00" height="7.40" fill="#a2ceaa"/>
<rect x="658.70" y="587.80" width="15.00" height="7.20" fill="#a2ceaa"/>
<rect x="668.61" y="580.90" width="15.00" height="10.10" fill="#a2ceaa"/>
<rect x="678.86" y="560.00" width="15.00" height="10.90" fill="#a2ceaa"/>
<rect x="689.11" y="564.00" width="15.00" height="8.10" fill="#a2ceaa"/>
<rect x="698.36" y="553.70" width="15.00" height="11.50" fill="#a2ceaa"/>
<rect x="708.61" y="550.80" width="15.00" height="8.00" fill="#a2ceaa"/>
<rect x="718.52" y="532.90" width="15.00" height="13.40" fill="#a2ceaa"/>
<rect x="728.77" y="498.90" width="15.00" height="19.10" fill="#a2ceaa"/>
<rect x="738.68" y="529.30" width="15.00" height="12.60" fill="#a2ceaa"/>
<rect x="748.93" y="513.00" width="15.00" height="18.50" fill="#a2ceaa"/>
<rect x="759.18" y="517.60" width="15.00" height="13.90" fill="#a2ceaa"/>
<rect x="769.09" y="503.80" width="15.00" height="18.10" fill="#a2ceaa"/>
<rect x="779.34" y="490.90" width="15.00" height="16.00" fill="#a2ceaa"/>
<rect x="789.25" y="484.80" width="15.00" height="21.10" fill="#a2ceaa"/>
<rect x="799.50" y="620.20" width="15.00" height="0.50" fill="#a2ceaa"/>
<rect x="427.00" y="619.80" width="15.00" height="0.40" fill="#849db1"/>
<rect x="437.25" y="594.00" width="15.00" height="3.00" fill="#849db1"/>
<rect x="447.50" y="595.00" width="15.00" height="2.00" fill="#849db1"/>
<rect x="456.75" y="590.00" width="15.00" height="2.00" fill="#849db1"/>
<rect x="467.00" y="592.20" width="15.00" height="0.80" fill="#849db1"/>
<rect x="476.91" y="586.10" width="15.00" height="2.90" fill="#849db1"/>
<rect x="487.16" y="572.10" width="15.00" height="3.90" fill="#849db1"/>
<rect x="497.07" y="583.10" width="15.00" height="5.00" fill="#849db1"/>
<rect x="507.32" y="577.10" width="15.00" height="17.90" fill="#849db1"/>
<rect x="517.57" y="581.00" width="15.00" height="4.00" fill="#849db1"/>
<rect x="527.48" y="571.00" width="15.00" height="7.80" fill="#849db1"/>
<rect x="537.73" y="575.20" width="15.00" height="4.90" fill="#849db1"/>
<rect x="547.64" y="572.10" width="15.00" height="7.70" fill="#849db1"/>
<rect x="557.89" y="583.10" width="15.00" height="5.00" fill="#849db1"/>
<rect x="568.14" y="583.10" width="15.00" height="6.90" fill="#849db1"/>
<rect x="577.72" y="597.10" width="15.00" height="2.00" fill="#849db1"/>
<rect x="587.97" y="599.10" width="15.00" height="1.90" fill="#849db1"/>
<rect x="597.88" y="596.00" width="15.00" height="0.90" fill="#849db1"/>
<rect x="608.13" y="584.10" width="15.00" height="2.90" fill="#849db1"/>
<rect x="618.04" y="595.00" width="15.00" height="2.10" fill="#849db1"/>
<rect x="628.29" y="590.00" width="15.00" height="3.00" fill="#849db1"/>
<rect x="638.54" y="590.90" width="15.00" height="3.20" fill="#849db1"/>
<rect x="648.45" y="588.10" width="15.00" height="1.80" fill="#849db1"/>
<rect x="658.70" y="585.80" width="15.00" height="2.00" fill="#849db1"/>
<rect x="668.61" y="580.10" width="15.00" height="0.80" fill="#849db1"/>
<rect x="678.86" y="554.80" width="15.00" height="5.20" fill="#849db1"/>
<rect x="689.11" y="558.80" width="15.00" height="5.20" fill="#849db1"/>
<rect x="698.36" y="546.80" width="15.00" height="6.90" fill="#849db1"/>
<rect x="708.61" y="545.60" width="15.00" height="5.20" fill="#849db1"/>
<rect x="718.52" y="522.90" width="15.00" height="10.00" fill="#849db1"/>
<rect x="728.77" y="486.00" width="15.00" height="12.90" fill="#849db1"/>
<rect x="738.68" y="518.00" width="15.00" height="11.30" fill="#849db1"/>
<rect x="748.93" y="503.00" width="15.00" height="10.00" fill="#849db1"/>
<rect x="759.18" y="509.00" width="15.00" height="8.60" fill="#849db1"/>
<rect x="769.09" y="492.90" width="15.00" height="10.90" fill="#849db1"/>
<rect x="779.34" y="475.70" width="15.00" height="15.20" fill="#849db1"/>
<rect x="789.25" y="471.90" width="15.00" height="12.90" fill="#849db1"/>
<rect x="799.50" y="619.70" width="15.00" height="0.50" fill="#849db1"/>
<rect x="427.00" y="618.52" width="15.00" height="1.28" fill="#4f6980"/>
<rect x="437.25" y="572.75" width="15.00" height="21.25" fill="#4f6980"/>
<rect x="447.50" y="573.05" width="15.00" height="21.95" fill="#4f6980"/>
<rect x="456.75" y="571.06" width="15.00" height="18.94" fill="#4f6980"/>
<rect x="467.00" y="569.27" width="15.00" height="22.93" fill="#4f6980"/>
<rect x="476.91" y="562.80" width="15.00" height="23.30" fill="#4f6980"/>
<rect x="487.16" y="543.90" width="15.00" height="28.20" fill="#4f6980"/>
<rect x="497.07" y="559.12" width="15.00" height="23.98" fill="#4f6980"/>
<rect x="507.32" y="557.13" width="15.00" height="19.97" fill="#4f6980"/>
<rect x="517.57" y="558.43" width="15.00" height="22.57" fill="#4f6980"/>
<rect x="527.48" y="547.08" width="15.00" height="23.92" fill="#4f6980"/>
<rect x="537.73" y="552.26" width="15.00" height="22.94" fill="#4f6980"/>
<rect x="547.64" y="551.26" width="15.00" height="20.84" fill="#4f6980"/>
<rect x="557.89" y="569.97" width="15.00" height="13.13" fill="#4f6980"/>
<rect x="568.14" y="568.67" width="15.00" height="14.43" fill="#4f6980"/>
<rect x="577.72" y="583.10" width="15.00" height="14.00" fill="#4f6980"/>
<rect x="587.97" y="580.22" width="15.00" height="18.88" fill="#4f6980"/>
<rect x="597.88" y="584.59" width="15.00" height="11.41" fill="#4f6980"/>
<rect x="608.13" y="563.50" width="15.00" height="20.60" fill="#4f6980"/>
<rect x="618.04" y="575.44" width="15.00" height="19.56" fill="#4f6980"/>
<rect x="628.29" y="566.88" width="15.00" height="23.12" fill="#4f6980"/>
<rect x="638.54" y="570.96" width="15.00" height="19.94" fill="#4f6980"/>
<rect x="648.45" y="565.69" width="15.00" height="22.41" fill="#4f6980"/>
<rect x="658.70" y="565.39" width="15.00" height="20.41" fill="#4f6980"/>
<rect x="668.61" y="556.14" width="15.00" height="23.96" fill="#4f6980"/>
<rect x="678.86" y="531.06" width="15.00" height="23.74" fill="#4f6980"/>
<rect x="689.11" y="540.32" width="15.00" height="18.48" fill="#4f6980"/>
<rect x="698.36" y="510.37" width="15.00" height="36.43" fill="#4f6980"/>
<rect x="708.61" y="510.77" width="15.00" height="34.84" fill="#4f6980"/>
<rect x="718.52" y="485.19" width="15.00" height="37.71" fill="#4f6980"/>
<rect x="728.77" y="446.59" width="15.00" height="39.41" fill="#4f6980"/>
<rect x="738.68" y="475.84" width="15.00" height="42.16" fill="#4f6980"/>
<rect x="748.93" y="456.54" width="15.00" height="46.46" fill="#4f6980"/>
<rect x="759.18" y="467.68" width="15.00" height="41.32" fill="#4f6980"/>
<rect x="769.09" y="443.40" width="15.00" height="49.50" fill="#4f6980"/>
<rect x="779.34" y="431.86" width="15.00" height="43.84" fill="#4f6980"/>
<rect x="789.25" y="421.81" width="15.00" height="50.09" fill="#4f6980"/>
<rect x="799.50" y="618.32" width="15.00" height="1.38" fill="#4f6980"/>
</g>
<polyline points="796.8,581.5 807.0,622.3" fill="none" stroke="#f47942" stroke-width="2.6" stroke-linejoin="round" stroke-linecap="round"/>
<polyline points="434.5,623.0 444.8,620.9 455.0,619.7 464.3,619.1 474.5,620.1 484.4,621.5 494.7,619.6 504.6,619.1 514.8,620.2 525.1,620.7 535.0,620.8 545.2,620.7 555.1,621.4 565.4,620.2 575.6,619.1 585.2,620.2 595.5,621.9 605.4,620.1 615.6,619.1 625.5,619.4 635.8,621.3 646.0,619.2 656.0,620.5 666.2,618.6 676.1,618.9 686.4,614.9 696.6,615.6 705.9,614.6 716.1,613.5 726.0,611.1 736.3,609.3 746.2,612.9 756.4,610.3 766.7,610.7 776.6,610.5 786.8,610.1 796.8,607.7 807.0,622.9" fill="none" stroke="#bfbb60" stroke-width="2.6" stroke-linejoin="round" stroke-linecap="round"/>
<polyline points="434.5,623.0 444.8,620.9 455.0,620.7 464.3,621.9 474.5,620.6 484.4,620.1 494.7,619.7 504.6,622.7 514.8,619.7 525.1,619.7 535.0,619.7 545.2,620.3 555.1,619.7 565.4,620.7 575.6,621.5 585.2,620.9 595.5,621.0 605.4,619.8 615.6,619.7 625.5,620.9 635.8,618.9 646.0,619.6 656.0,619.1 666.2,620.2 676.1,617.8 686.4,617.0 696.6,617.4 705.9,615.6 716.1,615.9 726.0,616.2 736.3,612.5 746.2,613.1 756.4,613.7 766.7,612.5 776.6,611.2 786.8,610.6 796.8,610.0 807.0,622.9" fill="none" stroke="#638b66" stroke-width="2.6" stroke-linejoin="round" stroke-linecap="round"/>
<polyline points="434.5,622.8 444.8,620.1 455.0,622.6 464.3,620.9 474.5,622.5 484.4,620.8 494.7,620.7 504.6,620.7 514.8,621.3 525.1,620.7 535.0,620.6 545.2,619.7 555.1,621.2 565.4,620.3 575.6,620.1 585.2,620.3 595.5,620.1 605.4,621.1 615.6,618.3 625.5,620.9 635.8,620.2 646.0,619.1 656.0,618.8 666.2,618.9 676.1,617.1 686.4,616.7 696.6,618.3 705.9,616.3 716.1,618.4 726.0,615.2 736.3,611.7 746.2,615.6 756.4,612.1 766.7,614.9 776.6,612.3 786.8,613.6 796.8,610.5 807.0,622.9" fill="none" stroke="#a2ceaa" stroke-width="2.6" stroke-linejoin="round" stroke-linecap="round"/>
<polyline points="434.5,623.0 444.8,621.4 455.0,622.0 464.3,622.0 474.5,622.7 484.4,621.5 494.7,620.9 504.6,620.2 514.8,612.5 525.1,620.8 535.0,618.5 545.2,620.3 555.1,618.6 565.4,620.2 575.6,619.1 585.2,622.0 595.5,622.1 605.4,622.7 615.6,621.5 625.5,621.9 635.8,621.4 646.0,621.3 656.0,622.1 666.2,622.0 676.1,622.7 686.4,620.1 696.6,620.1 705.9,619.1 716.1,620.1 726.0,617.2 736.3,615.5 746.2,616.4 756.4,617.2 766.7,618.0 776.6,616.7 786.8,614.1 796.8,615.5 807.0,622.9" fill="none" stroke="#849db1" stroke-width="2.6" stroke-linejoin="round" stroke-linecap="round"/>
<polyline points="434.5,622.4 444.8,610.3 455.0,609.9 464.3,611.7 474.5,609.3 484.4,609.0 494.7,606.0 504.6,608.6 514.8,611.0 525.1,609.5 535.0,608.6 545.2,609.2 555.1,610.5 565.4,615.2 575.6,614.4 585.2,614.7 595.5,611.7 605.4,616.2 615.6,610.7 625.5,611.3 635.8,609.2 646.0,611.1 656.0,609.6 666.2,610.8 676.1,608.6 686.4,608.7 696.6,611.9 705.9,601.0 716.1,602.0 726.0,600.2 736.3,599.0 746.2,597.5 756.4,594.8 766.7,597.9 776.6,593.0 786.8,596.3 796.8,592.5 807.0,622.4" fill="none" stroke="#4f6980" stroke-width="2.6" stroke-linejoin="round" stroke-linecap="round"/>
</g>
<g id="labels">
<text x="12.2" y="63.8" font-size="20" fill="#3e3e3e" text-anchor="start" textLength="83.8" lengthAdjust="spacingAndGlyphs" stroke="#fff" stroke-width="0.32">Pie Chart</text>
<text x="322.2" y="66.2" font-size="20" fill="#3e3e3e" text-anchor="start" textLength="88.1" lengthAdjust="spacingAndGlyphs" stroke="#fff" stroke-width="0.32">Bar Chart</text>
<text x="14.0" y="394.8" font-size="20" fill="#3e3e3e" text-anchor="start" textLength="120.5" lengthAdjust="spacingAndGlyphs" stroke="#fff" stroke-width="0.32">Bubble Chart</text>
<text x="322.2" y="395.1" font-size="20" fill="#3e3e3e" text-anchor="start" textLength="165.0" lengthAdjust="spacingAndGlyphs" stroke="#fff" stroke-width="0.32">Dual Combination</text>
<text x="47.0" y="165.1" font-size="12.8" fill="#333" text-anchor="middle" textLength="76.8" lengthAdjust="spacingAndGlyphs" >United States</text>
<text x="47.3" y="182.4" font-size="12.8" fill="#333" text-anchor="middle" textLength="63.8" lengthAdjust="spacingAndGlyphs" >$9,389,790</text>
<text x="277.6" y="160.3" font-size="12.8" fill="#333" text-anchor="middle" textLength="51.3" lengthAdjust="spacingAndGlyphs" >Australia</text>
<text x="277.1" y="177.2" font-size="12.8" fill="#333" text-anchor="middle" textLength="62.8" lengthAdjust="spacingAndGlyphs" >$9,061,001</text>
<text x="100.5" y="340.9" font-size="12.8" fill="#333" text-anchor="middle" textLength="50.4" lengthAdjust="spacingAndGlyphs" >Germany</text>
<text x="100.5" y="358.4" font-size="12.8" fill="#333" text-anchor="middle" textLength="63.8" lengthAdjust="spacingAndGlyphs" >$2,894,312</text>
<text x="241.4" y="340.9" font-size="12.8" fill="#333" text-anchor="middle" textLength="41.3" lengthAdjust="spacingAndGlyphs" >Canada</text>
<text x="241.6" y="358.4" font-size="12.8" fill="#333" text-anchor="middle" textLength="63.8" lengthAdjust="spacingAndGlyphs" >$1,977,845</text>
<text x="163.3" y="509.7" font-size="12.8" fill="#fff" text-anchor="middle" textLength="54.5" lengthAdjust="spacingAndGlyphs" >California</text>
<text x="163.5" y="527.1" font-size="12.8" fill="#fff" text-anchor="middle" textLength="64.2" lengthAdjust="spacingAndGlyphs" >$5,714,258</text>
<text x="95.0" y="614.4" font-size="12.8" fill="#fff" text-anchor="middle" textLength="45.0" lengthAdjust="spacingAndGlyphs" >England</text>
<text x="171.2" y="599.0" font-size="12.8" fill="#222" text-anchor="middle" textLength="37.7" lengthAdjust="spacingAndGlyphs" >British</text>
<text x="171.5" y="615.8" font-size="12.8" fill="#222" text-anchor="middle" textLength="52.2" lengthAdjust="spacingAndGlyphs" >Columbia</text>
<text x="400.4" y="466.9" font-size="12.8" fill="#8a8a8a" text-anchor="end" textLength="64.1" lengthAdjust="spacingAndGlyphs" >$1,500,000</text>
<text x="400.4" y="520.9" font-size="12.8" fill="#8a8a8a" text-anchor="end" textLength="64.1" lengthAdjust="spacingAndGlyphs" >$1,000,000</text>
<text x="400.4" y="574.4" font-size="12.8" fill="#8a8a8a" text-anchor="end" textLength="53.2" lengthAdjust="spacingAndGlyphs" >$500,000</text>
<text x="400.4" y="627.7" font-size="12.8" fill="#8a8a8a" text-anchor="end" textLength="13.5" lengthAdjust="spacingAndGlyphs" >$0</text>
<text x="841.4" y="466.9" font-size="12.6" fill="#8a8a8a" text-anchor="start" textLength="35.7" lengthAdjust="spacingAndGlyphs" >1500K</text>
<text x="841.4" y="520.9" font-size="12.6" fill="#8a8a8a" text-anchor="start" textLength="35.7" lengthAdjust="spacingAndGlyphs" >1000K</text>
<text x="841.4" y="574.4" font-size="12.6" fill="#8a8a8a" text-anchor="start" textLength="28.5" lengthAdjust="spacingAndGlyphs" >500K</text>
<text x="841.4" y="627.7" font-size="12.6" fill="#8a8a8a" text-anchor="start" textLength="14.8" lengthAdjust="spacingAndGlyphs" >0K</text>
<text x="444.5" y="653.8" font-size="12.6" fill="#777" text-anchor="middle" textLength="28.0" lengthAdjust="spacingAndGlyphs" >2011</text>
<text x="565.2" y="653.8" font-size="12.6" fill="#777" text-anchor="middle" textLength="28.0" lengthAdjust="spacingAndGlyphs" >2012</text>
<text x="686.0" y="653.8" font-size="12.6" fill="#777" text-anchor="middle" textLength="28.0" lengthAdjust="spacingAndGlyphs" >2013</text>
<text x="807.0" y="653.8" font-size="12.6" fill="#777" text-anchor="middle" textLength="28.0" lengthAdjust="spacingAndGlyphs" >2014</text>
<text x="620.5" y="677.8" font-size="12.8" fill="#333" text-anchor="middle" textLength="113.1" lengthAdjust="spacingAndGlyphs" >Month of OrderDate</text>
<text transform="translate(326,522) rotate(-90)" font-size="12.5" fill="#333" text-anchor="middle" dominant-baseline="central" textLength="74.5" lengthAdjust="spacingAndGlyphs">SalesAmount</text>
<text transform="translate(908.8,521.7) rotate(-90)" font-size="12.8" fill="#333" text-anchor="middle" dominant-baseline="central" textLength="100.2" lengthAdjust="spacingAndGlyphs">TotalProductCost</text>
<text x="235.8" y="445" font-family='"DejaVu Sans", sans-serif' font-weight="bold" font-size="12.6" fill="#851313" textLength="149.6" lengthAdjust="spacingAndGlyphs">©tutorialgateway.org</text>
</g>
<g id="filter">
<path d="M769,36 h17 v63 h-17 a2,2 0 0 1 -2,-2 v-59 a2,2 0 0 1 2,-2 z" fill="#8e8b8f"/>
<rect x="786" y="37" width="142" height="165.2" rx="1" fill="#fff" stroke="#878689" stroke-width="2"/>
<rect x="785" y="36" width="2" height="63" fill="#746f73"/>
<text x="791.5" y="52.8" font-size="11.6" fill="#333" textLength="77" lengthAdjust="spacingAndGlyphs">CountryName</text>
<path d="M832,36 h50 v10.5 a2,2 0 0 1 -2,2 h-46 a2,2 0 0 1 -2,-2 z" fill="#8f8f8f"/>
<rect x="837" y="40.5" width="41" height="1.2" fill="#fff"/><rect x="837" y="44" width="41" height="1.2" fill="#fff"/>
<path d="M771.5,41.5 l9,9 M780.5,41.5 l-9,9" stroke="#fff" stroke-width="1.5" fill="none"/>
<path d="M773,60.5 h6.5 M774.3,60.5 v5.5 M778.2,60.5 v5.5 M771.8,66.5 h9 M776.2,66.5 v7" stroke="#fff" stroke-width="1.3" fill="none"/>
<path d="M772.4,86 h7.6 l-3.8,4 z" fill="#fff"/>
<rect x="797.5" y="63.3" width="14" height="14" rx="2" fill="#fff" stroke="#cdcdcd" stroke-width="1"/>
<text x="818.6" y="74.6" font-size="12" fill="#555" letter-spacing="0.3">(All)</text>
<rect x="797.5" y="82.3" width="14" height="14" rx="2" fill="#fff" stroke="#6b6b6b" stroke-width="1"/>
<path d="M800.6,89.8 l2.8,3.2 l5,-7" fill="none" stroke="#555" stroke-width="1.3"/>
<text x="818.6" y="93.6" font-size="12" fill="#555" letter-spacing="0.3">Australia</text>
<rect x="797.5" y="101.4" width="14" height="14" rx="2" fill="#fff" stroke="#6b6b6b" stroke-width="1"/>
<path d="M800.6,108.8 l2.8,3.2 l5,-7" fill="none" stroke="#555" stroke-width="1.3"/>
<text x="818.6" y="112.7" font-size="12" fill="#555" letter-spacing="0.3">Canada</text>
<rect x="797.5" y="120.5" width="14" height="14" rx="2" fill="#fff" stroke="#cdcdcd" stroke-width="1"/>
<text x="818.6" y="131.8" font-size="12" fill="#555" letter-spacing="0.3">France</text>
<rect x="797.5" y="139.5" width="14" height="14" rx="2" fill="#fff" stroke="#6b6b6b" stroke-width="1"/>
<path d="M800.6,146.9 l2.8,3.2 l5,-7" fill="none" stroke="#555" stroke-width="1.3"/>
<text x="818.6" y="150.8" font-size="12" fill="#555" letter-spacing="0.3">Germany</text>
<rect x="797.5" y="158.6" width="14" height="14" rx="2" fill="#fff" stroke="#cdcdcd" stroke-width="1"/>
<text x="818.6" y="169.9" font-size="12" fill="#555" letter-spacing="0.3">United Kingdom</text>
<rect x="797.5" y="177.6" width="14" height="14" rx="2" fill="#fff" stroke="#6b6b6b" stroke-width="1"/>
<path d="M800.6,185.0 l2.8,3.2 l5,-7" fill="none" stroke="#555" stroke-width="1.3"/>
<text x="818.6" y="188.9" font-size="12" fill="#555" letter-spacing="0.3">United States</text>
</g>
</svg>
</body></html>
